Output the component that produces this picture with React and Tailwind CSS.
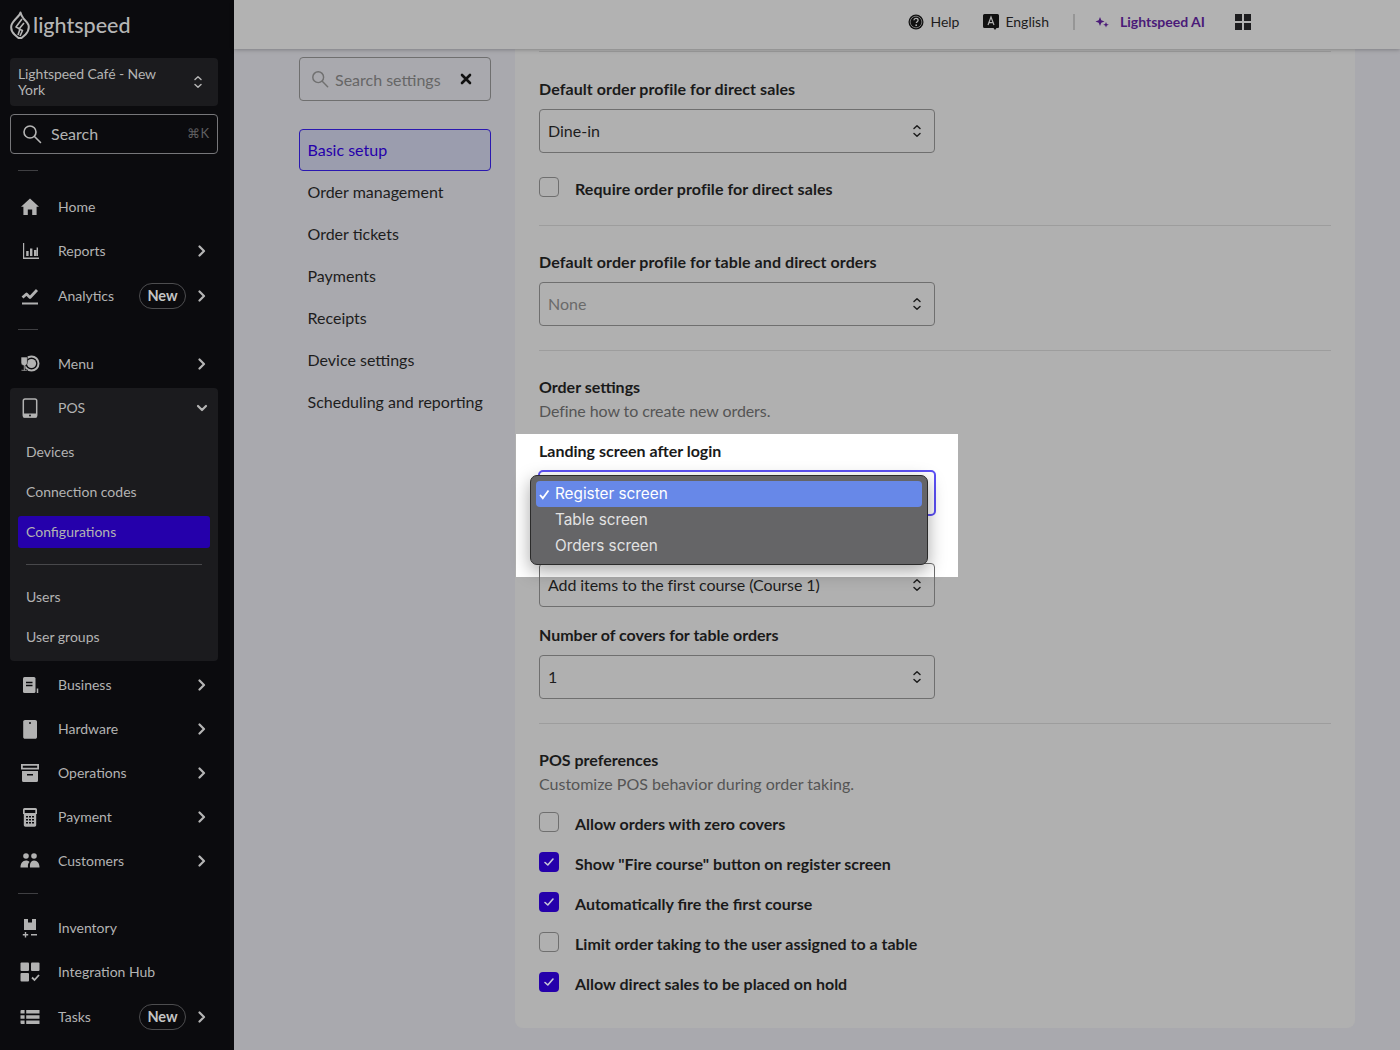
import React from "react";

const Chevron = ({ down }) => (
  <svg width="12" height="12" viewBox="0 0 12 12" fill="none" stroke="#b5b5b5" strokeWidth="2.2" strokeLinecap="round" strokeLinejoin="round">
    {down ? <path d="M2 4l4 4 4-4" /> : <path d="M3.5 1.5L8 6l-4.5 4.5" />}
  </svg>
);

const UpDown = ({ color = "#1d1d1d" }) => (
  <svg width="10" height="14" viewBox="0 0 10 14" fill="none" stroke={color} strokeWidth="1.5" strokeLinecap="round" strokeLinejoin="round">
    <path d="M2 4.5L5 1.8l3 2.7M2 9.5l3 2.7 3-2.7" />
  </svg>
);

const SearchIcon = ({ color, size = 20 }) => (
  <svg width={size} height={size} viewBox="0 0 20 20" fill="none" stroke={color} strokeWidth="1.6" strokeLinecap="round">
    <circle cx="8" cy="8" r="6" />
    <path d="M12.5 12.5L18.5 18.5" />
  </svg>
);

const c = "#b2b2b2";
const icons = {
  home: <path fill={c} d="M10 1.5l9 8.3h-2.4V18h-4.4v-5.6H7.8V18H3.4V9.8H1z" />,
  reports: (
    <g fill={c}>
      <path d="M3 2h1.2v14.6H19V18H3z" />
      <path d="M6.2 10h2.4v5H6.2zM10 7.5h2.4V15H10zM14 9h2.4v6H14zM16.6 6.5h1.4V15h-1.4z" />
    </g>
  ),
  analytics: (
    <g fill="none" stroke={c}>
      <path strokeWidth="2.8" strokeLinejoin="round" d="M2.5 11.5l4-3.5 3.5 3.5 7-7.5" />
      <path strokeWidth="2" d="M2 17.5h16" />
    </g>
  ),
  menu: (
    <g>
      <circle cx="11.5" cy="9.5" r="7" fill="none" stroke={c} strokeWidth="2" />
      <circle cx="11.5" cy="9.5" r="4.6" fill={c} />
      <path fill={c} stroke="#0b0b0e" strokeWidth="0.6" d="M1 3h6.4v5.4c0 1.7-1.2 3-2.4 3.2v4.2h2.4V17H1.2v-1.2h2.4v-4.2C2.2 11.4 1 10.1 1 8.4z" />
    </g>
  ),
  pos: (
    <g>
      <rect x="3.3" y="1" width="13.4" height="18" rx="1.8" fill="none" stroke={c} strokeWidth="1.5" />
      <path fill={c} d="M3 15.5h14V18a1.5 1.5 0 0 1-1.5 1.5h-11A1.5 1.5 0 0 1 3 18z" />
      <circle cx="10" cy="17.4" r="1" fill="#1b1b1e" />
    </g>
  ),
  business: (
    <g>
      <rect x="3" y="2" width="12.5" height="16" rx="1.5" fill={c} />
      <path d="M6 7.5h6.5M6 10.500h6.500" stroke="#0b0b0e" strokeWidth="1.3" />
      <path d="M17.5 13.5V18" stroke={c} strokeWidth="1.5" />
    </g>
  ),
  hardware: (
    <g>
      <path fill={c} d="M5 1h10.200c1 0 1.800.8 1.800 1.800V18c0 1-.8 1.800-1.800 1.800H5C4 19.800 3.200 19 3.200 18V2.800C3.200 1.800 4 1 5 1z" />
      <circle cx="10" cy="4" r="1" fill="#0b0b0e" />
    </g>
  ),
  operations: (
    <g fill={c}>
      <path fillRule="evenodd" d="M1 1h18v5.5H1zM2.800 2.700v2h14.400v-2z" />
      <path fillRule="evenodd" d="M2 8h16v9.500a1.500 1.500 0 0 1-1.500 1.500h-13A1.500 1.500 0 0 1 2 17.500zM7 11v1.500h6V11z" />
    </g>
  ),
  payment: (
    <g fill={c}>
      <path fillRule="evenodd" d="M4.500 1h11A1.500 1.500 0 0 1 17 2.500V7h-.8v11c0 1-.7 1.700-1.700 1.700h-9c-1 0-1.700-.7-1.700-1.700V7H3V2.500A1.500 1.500 0 0 1 4.500 1zm.2 2v3h10.600V3z" />
      <g fill="#0b0b0e">
        <path d="M6 9h2v1.600H6zM9 9h2v1.600H9zM12 9h2v1.600h-2zM6 12h2v1.600H6zM9 12h2v1.600H9zM12 12h2v1.600h-2zM6 15h2v1.600H6zM9 15h2v1.600H9zM12 15h2v1.600h-2z" />
      </g>
    </g>
  ),
  customers: (
    <g fill={c}>
      <circle cx="6" cy="5" r="2.800" />
      <circle cx="14" cy="5" r="2.800" />
      <path d="M.500 16.500c0-4 2-7 5.500-7 1.500 0 2.700.5 3.500 1.500-1.400 1.200-1.800 3-1.500 5.500z" />
      <path d="M10 16.500c-.5-4 1-7 4-7 3.500 0 5.500 3 5.500 7z" />
    </g>
  ),
  inventory: (
    <g fill={c}>
      <path d="M4 1h4v3.500h4V1h4v11H4z" />
      <path d="M4.800 14h1.400v2h2v1.400h-2v2H4.800v-2h-2V16h2zM11 16h6v1.400h-6z" />
    </g>
  ),
  integration: (
    <g fill={c}>
      <rect x="0.500" y="0.500" width="8.500" height="8.500" rx="1" />
      <rect x="11" y="0.500" width="8.500" height="8.500" rx="1" />
      <rect x="0.500" y="11" width="8.500" height="8.500" rx="1" />
      <path d="M12 15.500l2.500 2.500 4.500-5" fill="none" stroke={c} strokeWidth="1.800" />
    </g>
  ),
  tasks: (
    <g fill={c}>
      <path d="M1.500 3H4.600v3.600H.500V4A1 1 0 0 1 1.500 3zM6.200 3h13.300v3.600H6.200zM.500 8.200h4.100v3.600H.500zM6.200 8.200h13.300v3.600H6.200zM.500 13.400h4.100V17H1.500a1 1 0 0 1-1-1zM6.200 13.400h13.300V17H6.200z" />
    </g>
  ),
};

const Badge = () => (
  <span className="flex h-[26px] w-[47px] items-center justify-center rounded-full border border-[#4d4d4f] text-[14.5px] font-bold text-[#c4c4c4]">New</span>
);

const NavItem = ({ icon, label, arrow = true, badge }) => (
  <div className={`flex items-center pl-[20px] pr-[26px] ${badge ? "h-[45px]" : "h-[44px]"}`}>
    <svg width="20" height="20" viewBox="0 0 20 20" className="shrink-0">{icons[icon]}</svg>
    <span className={`ml-[18px] flex-1 text-[14px] text-[#b3b3b3] ${badge ? "" : "mb-[2px]"}`}>{label}</span>
    {badge && <span className="mr-[10px]"><Badge /></span>}
    {arrow && <Chevron />}
  </div>
);

const SubItem = ({ label, active }) =>
  active ? (
    <div className="mx-[8px] my-[4px] flex h-[32px] items-center rounded-[3px] bg-[#2500ab] px-[8px] pb-[2px] text-[14px] text-[#b3b3b3]">{label}</div>
  ) : (
    <div className="flex h-[40px] items-center px-[16px] pb-[2px] text-[14px] text-[#b3b3b3]">{label}</div>
  );

const Divider = () => <div className="ml-[18px] h-px w-[20px] bg-[#3f3f42]" />;

const Sidebar = () => (
  <aside className="flex h-[1050px] w-[234px] shrink-0 flex-col overflow-hidden bg-[#0b0b0e]">
    <div className="flex h-[58px] items-start pl-[10px] pt-[11px]">
      <svg width="20" height="28" viewBox="0 0 20 28" fill="none" stroke="#b5b5b5" strokeWidth="2" strokeLinejoin="round">
        <path d="M10.500 1.500C10 5 3 9 1.500 14c-.800 3 .5 7 3 9.500l4 3.500h3l4-3.500c2.500-2.500 3.800-6 3-9.500-.8-3-4-5-5-6.500-1.500-2-2.500-4-3-6z" />
        <path d="M12 8l-6 8 4 2-2 6M14 12l-5 6 3.500 1.500L10 25" strokeWidth="1.600" />
      </svg>
      <span className="ml-[3px] text-[21.5px] font-medium leading-[28px] text-[#b5b5b5]">lightspeed</span>
    </div>
    <div className="ml-[10px] flex h-[48px] w-[208px] items-center justify-between rounded-[4px] bg-[#1b1b1e] pl-[8px] pr-[15px]">
      <span className="w-[150px] text-[14px] leading-[16px] tracking-[-0.1px] text-[#b3b3b3]">Lightspeed Café - New York</span>
      <UpDown color="#b5b5b5" />
    </div>
    <div className="ml-[10px] mt-[8px] flex h-[40px] w-[208px] items-center rounded-[4px] border border-[#77777a] pl-[11px] pr-[8px]">
      <SearchIcon color="#b5b5b5" />
      <span className="ml-[9px] flex-1 text-[16px] text-[#b3b3b3]">Search</span>
      <span className="text-[13px] text-[#5f5f61]">⌘K</span>
    </div>
    <div className="mt-[16px]"><Divider /></div>
    <div className="mt-[14px]">
      <NavItem icon="home" label="Home" arrow={false} />
      <NavItem icon="reports" label="Reports" />
      <NavItem icon="analytics" label="Analytics" badge />
    </div>
    <div className="mt-[11px]"><Divider /></div>
    <div className="mt-[12px]"><NavItem icon="menu" label="Menu" /></div>
    <div className="ml-[10px] mt-[2px] w-[208px] rounded-[4px] bg-[#1b1b1e] pb-[4px]">
      <div className="flex h-[40px] items-center pl-[10px] pr-[10px]">
        <svg width="20" height="20" viewBox="0 0 20 20" className="shrink-0">{icons.pos}</svg>
        <span className="mb-[2px] ml-[18px] flex-1 text-[14px] text-[#b3b3b3]">POS</span>
        <Chevron down />
      </div>
      <div className="mt-[4px] flex flex-col">
        <SubItem label="Devices" />
        <SubItem label="Connection codes" />
        <SubItem label="Configurations" active />
        <div className="mx-[16px] my-[12px] h-px bg-[#48484b]" />
        <SubItem label="Users" />
        <SubItem label="User groups" />
      </div>
    </div>
    <div className="mt-[2px]">
      <NavItem icon="business" label="Business" />
      <NavItem icon="hardware" label="Hardware" />
      <NavItem icon="operations" label="Operations" />
      <NavItem icon="payment" label="Payment" />
      <NavItem icon="customers" label="Customers" />
    </div>
    <div className="mt-[10px]"><Divider /></div>
    <div className="mt-[12px]">
      <NavItem icon="inventory" label="Inventory" arrow={false} />
      <NavItem icon="integration" label="Integration Hub" arrow={false} />
      <NavItem icon="tasks" label="Tasks" badge />
    </div>
  </aside>
);

const TopBar = () => (
  <header className="relative z-30 flex h-[49px] shrink-0 items-center justify-end bg-[#b2b2b2] pb-[6px] pr-[149px] shadow-[0_1px_4px_rgba(0,0,0,0.25)]">
    <svg width="16" height="16" viewBox="0 0 16 16">
      <circle cx="8" cy="8" r="7.5" fill="#111" />
      <circle cx="8" cy="8" r="5.8" fill="none" stroke="#b2b2b2" strokeWidth="0.6" />
      <path d="M5.900 6.300C6 5 7 4.400 8 4.400c1.200 0 2.100.8 2.100 1.800 0 1.400-1.800 1.500-1.800 2.900" fill="none" stroke="#b2b2b2" strokeWidth="1.3" />
      <circle cx="8.200" cy="11.200" r="0.9" fill="#b2b2b2" />
    </svg>
    <span className="ml-[6px] text-[14px] text-[#1d1d1d]">Help</span>
    <svg width="16" height="16" viewBox="0 0 16 16" className="ml-[24px]">
      <path fill="#111" d="M1.500 0h13A1.500 1.500 0 0 1 16 1.500V13a1 1 0 0 1-1 1h-1.500L12 16l-1.500-2h-9A1.500 1.500 0 0 1 0 12.500v-11A1.500 1.500 0 0 1 1.500 0z" />
      <path fill="none" stroke="#b2b2b2" strokeWidth="1.2" d="M5 11l3-8 3 8M6 8.600h4" />
    </svg>
    <span className="ml-[6px] text-[14px] text-[#1d1d1d]">English</span>
    <div className="ml-[24px] h-[16px] w-[2px] bg-[#969696]" />
    <svg width="14" height="14" viewBox="0 0 14 14" fill="#4a1a78" className="ml-[20px]">
      <path d="M5 2l1.300 3.300L9.500 6.500 6.300 7.800 5 11 3.700 7.800.5 6.500l3.200-1.200zM11 7l.8 2 2 .8-2 .8-.8 2-.8-2-2-.8 2-.8z" />
    </svg>
    <span className="ml-[11px] text-[14px] font-bold text-[#4a1a78]">Lightspeed AI</span>
    <div className="ml-[30px] grid grid-cols-2 gap-[2px]">
      <div className="h-[7px] w-[7px] bg-[#1d1d1f]" />
      <div className="h-[7px] w-[7px] bg-[#1d1d1f]" />
      <div className="h-[7px] w-[7px] bg-[#1d1d1f]" />
      <div className="h-[7px] w-[7px] bg-[#1d1d1f]" />
    </div>
  </header>
);

const SettingsNav = () => (
  <nav className="w-[281px] shrink-0 pl-[65px] pr-[24px] pt-[8px]">
    <div className="flex h-[44px] items-center rounded-[4px] border border-[#6f6f6f] pl-[11px] pr-[18px]">
      <SearchIcon color="#707070" size={18} />
      <span className="ml-[6px] mt-[2px] flex-1 text-[16px] text-[#666]">Search settings</span>
      <svg width="12" height="12" viewBox="0 0 12 12" stroke="#111" strokeWidth="2.6" strokeLinecap="round"><path d="M2 2l8 8M10 2l-8 8" /></svg>
    </div>
    <div className="mt-[28px] flex h-[42px] items-center rounded-[4px] border border-[#2a18b0] bg-[#9b9dae] pl-[7.5px] text-[16px] text-[#2500ab]">Basic setup</div>
    {["Order management", "Order tickets", "Payments", "Receipts", "Device settings", "Scheduling and reporting"].map((t) => (
      <div key={t} className="flex h-[42px] items-center pl-[8.5px] text-[16px] text-[#1d1d1d]">{t}</div>
    ))}
  </nav>
);

const Label = ({ children, className = "" }) => (
  <div className={`relative h-[20px] text-[16px] font-bold leading-[20px] text-[#1a1a1a] ${className}`}>{children}</div>
);

const Select = ({ value, muted, className = "" }) => (
  <div className={`relative flex h-[44px] w-[396px] items-center justify-between rounded-[4px] border border-[#6f6f6f] pl-[8px] pr-[12px] text-[16px] ${muted ? "text-[#6a6a6a]" : "text-[#1d1d1d]"} ${className}`}>
    <span>{value}</span>
    <UpDown />
  </div>
);

const Check = ({ on, label, className = "", wide }) => (
  <div className={`flex h-[20px] items-center ${className}`}>
    {on ? (
      <span className="flex h-[20px] w-[20px] items-center justify-center rounded-[4px] bg-[#2500ab]">
        <svg width="12" height="12" viewBox="0 0 12 12" fill="none" stroke="#c8c8d8" strokeWidth="1.6" strokeLinecap="round" strokeLinejoin="round"><path d="M2 6.500l2.800 2.500L10 3" /></svg>
      </span>
    ) : (
      <span className="h-[20px] w-[20px] rounded-[4px] border border-[#6f6f6f]" />
    )}
    <span className={`ml-[16px] mt-[3px] text-[16px] font-bold text-[#1a1a1a] ${wide ? "tracking-[0.08px]" : ""}`}>{label}</span>
  </div>
);

const Rule = ({ className = "" }) => <div className={`h-px bg-[#9d9d9d] ${className}`} />;

const LandingField = () => (
  <div className="relative mt-[20px]">
    <div className="absolute left-[-23px] top-[-7px] h-[143px] w-[442px] bg-white" />
    <Label>Landing screen after login</Label>
    <div className="relative ml-[-1px] mt-[9px] h-[46px] w-[398px] rounded-[5px] border-2 border-[#5c50f5]" />
    <div className="absolute left-[-9px] top-[34px] z-20 w-[398px] rounded-[7px] border border-[#2b2b2b] bg-[#656567] p-[5px] font-['Inter',sans-serif] text-[15.3px] shadow-[0_6px_18px_rgba(0,0,0,0.35)]">
      <div className="flex h-[26px] items-center rounded-[4px] bg-[#6788e8] text-white">
        <svg width="11" height="11" viewBox="0 0 11 11" fill="none" stroke="#fff" strokeWidth="1.8" className="ml-[3px]"><path d="M1 6l2.800 3.200L9.500 1.500" /></svg>
        <span className="ml-[5px]">Register screen</span>
      </div>
      <div className="flex h-[26px] items-center pl-[19px] text-[#e2e2e2]">Table screen</div>
      <div className="flex h-[26px] items-center pl-[19px] text-[#e2e2e2]">Orders screen</div>
    </div>
  </div>
);

const SettingsCard = () => (
  <section className="relative mb-[22px] w-[840px] rounded-b-[8px] bg-[#b0b0b0] pb-[34px] pl-[24px] pr-[24px]">
    <Rule className="relative top-[2px]" />
    <Label className="mt-[29px] tracking-[0.08px]">Default order profile for direct sales</Label>
    <Select value="Dine-in" className="mt-[10px]" />
    <Check wide label="Require order profile for direct sales" className="mt-[24px]" />
    <Rule className="mt-[28px]" />
    <Label className="mt-[26px] tracking-[0.08px]">Default order profile for table and direct orders</Label>
    <Select value="None" muted className="mt-[10px]" />
    <Rule className="mt-[24px]" />
    <Label className="mt-[26px]">Order settings</Label>
    <div className="mt-[4px] h-[20px] text-[16px] leading-[20px] tracking-[-0.09px] text-[#555]">Define how to create new orders.</div>
    <LandingField />
    <Select value="Add items to the first course (Course 1)" className="mt-[47px] tracking-[-0.08px]" />
    <Label className="mt-[18px]">Number of covers for table orders</Label>
    <Select value="1" className="mt-[10px]" />
    <Rule className="mt-[24px]" />
    <Label className="mt-[26px]">POS preferences</Label>
    <div className="mt-[4px] h-[20px] text-[16px] leading-[20px] text-[#555]">Customize POS behavior during order taking.</div>
    <div className="mt-[18px] flex flex-col gap-[20px]">
      <Check label="Allow orders with zero covers" />
      <Check on label='Show "Fire course" button on register screen' />
      <Check on label="Automatically fire the first course" />
      <Check label="Limit order taking to the user assigned to a table" />
      <Check on label="Allow direct sales to be placed on hold" />
    </div>
  </section>
);

export default function App() {
  return (
    <div className="flex h-[1050px] w-[1400px] overflow-hidden bg-[#a9a9ae] font-['Lato',sans-serif]">
      <Sidebar />
      <main className="flex min-w-0 flex-1 flex-col">
        <TopBar />
        <div className="flex flex-1">
          <SettingsNav />
          <SettingsCard />
        </div>
      </main>
    </div>
  );
}
